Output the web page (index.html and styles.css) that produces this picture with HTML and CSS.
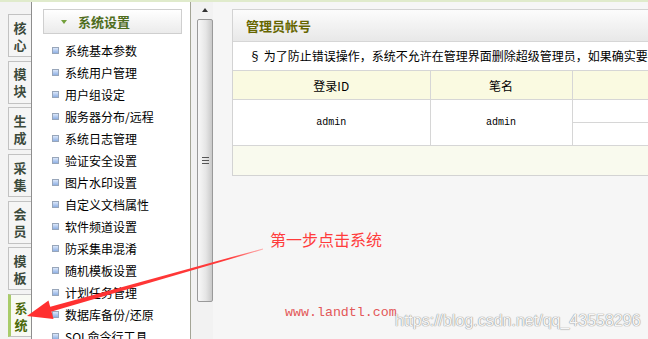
FILE: index.html
```html
<!DOCTYPE html>
<html lang="zh-CN">
<head>
	<meta charset="UTF-8">
	<title>系统设置</title>
	<link rel="stylesheet" href="styles.css">
</head>
<body>
	<div class="frame">
		<!-- 左侧竖排标签 -->
		<div class="tabs">
			<div class="tab"><span>核</span><span>心</span></div>
			<div class="tab"><span>模</span><span>块</span></div>
			<div class="tab"><span>生</span><span>成</span></div>
			<div class="tab"><span>采</span><span>集</span></div>
			<div class="tab"><span>会</span><span>员</span></div>
			<div class="tab"><span>模</span><span>板</span></div>
			<div class="tab on"><span>系</span><span>统</span></div>
		</div>

		<!-- 菜单 -->
		<div class="menu">
			<div class="menu-head"><i class="tri"></i>系统设置</div>
			<ul class="menu-list">
				<li>系统基本参数</li>
				<li>系统用户管理</li>
				<li>用户组设定</li>
				<li>服务器分布/远程</li>
				<li>系统日志管理</li>
				<li>验证安全设置</li>
				<li>图片水印设置</li>
				<li>自定义文档属性</li>
				<li>软件频道设置</li>
				<li>防采集串混淆</li>
				<li>随机模板设置</li>
				<li>计划任务管理</li>
				<li>数据库备份/还原</li>
				<li>SQL命令行工具</li>
			</ul>
		</div>

		<!-- 滚动条 -->
		<div class="scroll">
			<i class="up"></i>
			<div class="thumb"><i class="grip"></i></div>
		</div>

		<!-- 主内容 -->
		<div class="main">
			<div class="panel">
				<div class="panel-title">管理员帐号</div>
				<div class="notice">§ 为了防止错误操作，系统不允许在管理界面删除超级管理员，如果确实要删除，请先修改其级别再删除。</div>
				<table class="grid">
					<tr class="head">
						<td class="c1">登录ID</td>
						<td class="c2">笔名</td>
						<td class="c3"></td>
					</tr>
					<tr class="half">
						<td rowspan="2" class="mono">admin</td>
						<td rowspan="2" class="mono">admin</td>
						<td></td>
					</tr>
					<tr class="half">
						<td></td>
					</tr>
					<tr class="foot">
						<td colspan="3"></td>
					</tr>
				</table>
			</div>
		</div>
	</div>

	<!-- 标注 -->
	<svg class="arrow" width="648" height="339" viewBox="0 0 648 339">
		<defs>
			<linearGradient id="fade" gradientUnits="userSpaceOnUse" x1="40" y1="310" x2="263" y2="249">
				<stop offset="0" stop-color="#ff2f2f"/>
				<stop offset="0.85" stop-color="#ff3b3b"/>
				<stop offset="1" stop-color="#ffb0b0"/>
			</linearGradient>
		</defs>
		<polygon fill="url(#fade)" points="50.8,311.8 49.4,307.0 262.9,248.5 263.1,249.5"/>
		<polygon fill="#ff2f2f" points="27,316 48.5,300.5 53.5,319"/>
	</svg>
	<div class="note">第一步点击系统</div>
	<div class="site">www.landtl.com</div>
	<div class="mark">https://blog.csdn.net/qq_43558296</div>
</body>
</html>
```
FILE: styles.css
```css
* { box-sizing: border-box; }

body {
	margin: 0;
	width: 648px;
	height: 339px;
	overflow: hidden;
	position: relative;
	border-top: 2px solid #e0ebcc;
	background: #f6f6f6;
	font-family: "Noto Sans CJK SC", sans-serif;
	font-size: 12px;
	color: #000;
}

.frame { display: flex; height: 100%; }

/* 竖排标签 */
.tabs {
	width: 32px;
	flex: none;
	padding: 12px 0 0 8px;
	border-right: 1px solid #8e8e8e;
	background: #f3f3f3;
	display: flex;
	flex-direction: column;
	gap: 3.7px;
}
.tab {
	height: 43px;
	flex: none;
	border: 1px solid #c2c2c2;
	border-right: 0;
	background: #f5f5f5;
	color: #3c4a3c;
	font-weight: bold;
	font-size: 13px;
	line-height: 17px;
	display: flex;
	flex-direction: column;
	align-items: center;
	justify-content: center;
}
.tab.on {
	border-left: 3px solid #a9cc6a;
	background: #f8faf3;
	color: #4d6a0a;
}

/* 菜单 */
.menu {
	width: 159px;
	flex: none;
	padding: 7px 8px 0 11px;
	background: #fff;
	border-right: 1px solid #a4a596;
}
.menu-head {
	height: 25px;
	border: 1px solid #cfcfcf;
	background: linear-gradient(#ffffff, #ebebeb);
	color: #4f6d1d;
	font-weight: bold;
	font-size: 13px;
	display: flex;
	align-items: center;
	padding-left: 17px;
}
.tri {
	width: 0;
	height: 0;
	border-left: 3px solid transparent;
	border-right: 3px solid transparent;
	border-top: 4px solid #73a03c;
	margin-right: 11px;
}
.menu-list {
	list-style: none;
	margin: 5px 0 0;
	padding: 0 0 0 9px;
}
.menu-list li {
	height: 22px;
	display: flex;
	align-items: center;
	white-space: nowrap;
}
.menu-list li::before {
	content: "";
	width: 5px;
	height: 5px;
	flex: none;
	border: 1px solid #98a6ba;
	background: linear-gradient(#dbe7fa, #8fb0e4);
	margin-right: 6px;
}

/* 滚动条 */
.scroll {
	width: 22px;
	flex: none;
	padding-left: 6px;
	background: #f2f2f2;
	display: flex;
	flex-direction: column;
	align-items: center;
}
.up {
	width: 0;
	height: 0;
	margin: 6px 0 7px;
	border-left: 3px solid transparent;
	border-right: 3px solid transparent;
	border-bottom: 4px solid #333;
}
.thumb {
	width: 16px;
	height: 283px;
	flex: none;
	border: 1px solid #9a9a9a;
	border-radius: 2px;
	background: linear-gradient(to right, #f8f8f8, #e6e6e6 55%, #c9c9c9);
	display: flex;
	align-items: center;
	justify-content: center;
}
.grip {
	width: 7px;
	height: 7px;
	background: repeating-linear-gradient(#555 0 1px, transparent 1px 3px);
}

/* 主内容 */
.main {
	flex: 1;
	overflow: hidden;
	padding: 7px 0 0 19px;
	background: #f6f6f6;
}
.panel {
	width: 640px;
	border: 1px solid #d3d3d3;
	background: #fff;
}
.panel-title {
	height: 32px;
	padding-left: 13px;
	border-bottom: 1px solid #d6d6d6;
	background: linear-gradient(#fcfcfc, #e8e8e8);
	color: #666600;
	font-weight: bold;
	font-size: 13px;
	line-height: 31px;
}
.notice {
	height: 28px;
	padding-left: 16px;
	line-height: 27px;
	white-space: nowrap;
	overflow: hidden;
}
.grid {
	width: 100%;
	border-collapse: collapse;
}
.grid td {
	padding: 0;
	border: 1px solid #d6d6d6;
	text-align: center;
	vertical-align: middle;
}
.grid tr td:first-child { border-left: 0; }
.grid .c1 { width: 197px; }
.grid .c2 { width: 142px; }
.grid .head td { height: 29px; background: #fafae1; }
.grid .half td { height: 23px; }
.grid .foot td { height: 29px; background: #f9faee; border-bottom: 0; }
.mono {
	font-family: "Liberation Mono", monospace;
	font-size: 10px;
	padding-top: 3px;
}

/* 标注 */
.arrow {
	position: absolute;
	left: 0;
	top: -2px;
	pointer-events: none;
}
.note {
	position: absolute;
	left: 270px;
	top: 226px;
	color: #ff3c3c;
	font-size: 16px;
	line-height: 22px;
}
.site {
	position: absolute;
	left: 285px;
	top: 302px;
	color: #e35858;
	font-family: "Liberation Mono", monospace;
	font-size: 13.3px;
	line-height: 18px;
}
.mark {
	position: absolute;
	left: 395px;
	top: 310px;
	color: #f6f6f6;
	font-family: "Liberation Sans", sans-serif;
	font-size: 16px;
	line-height: 18px;
	text-shadow: 0 0 1px #8a8a8a, 0 0 1px #8a8a8a;
}
```
